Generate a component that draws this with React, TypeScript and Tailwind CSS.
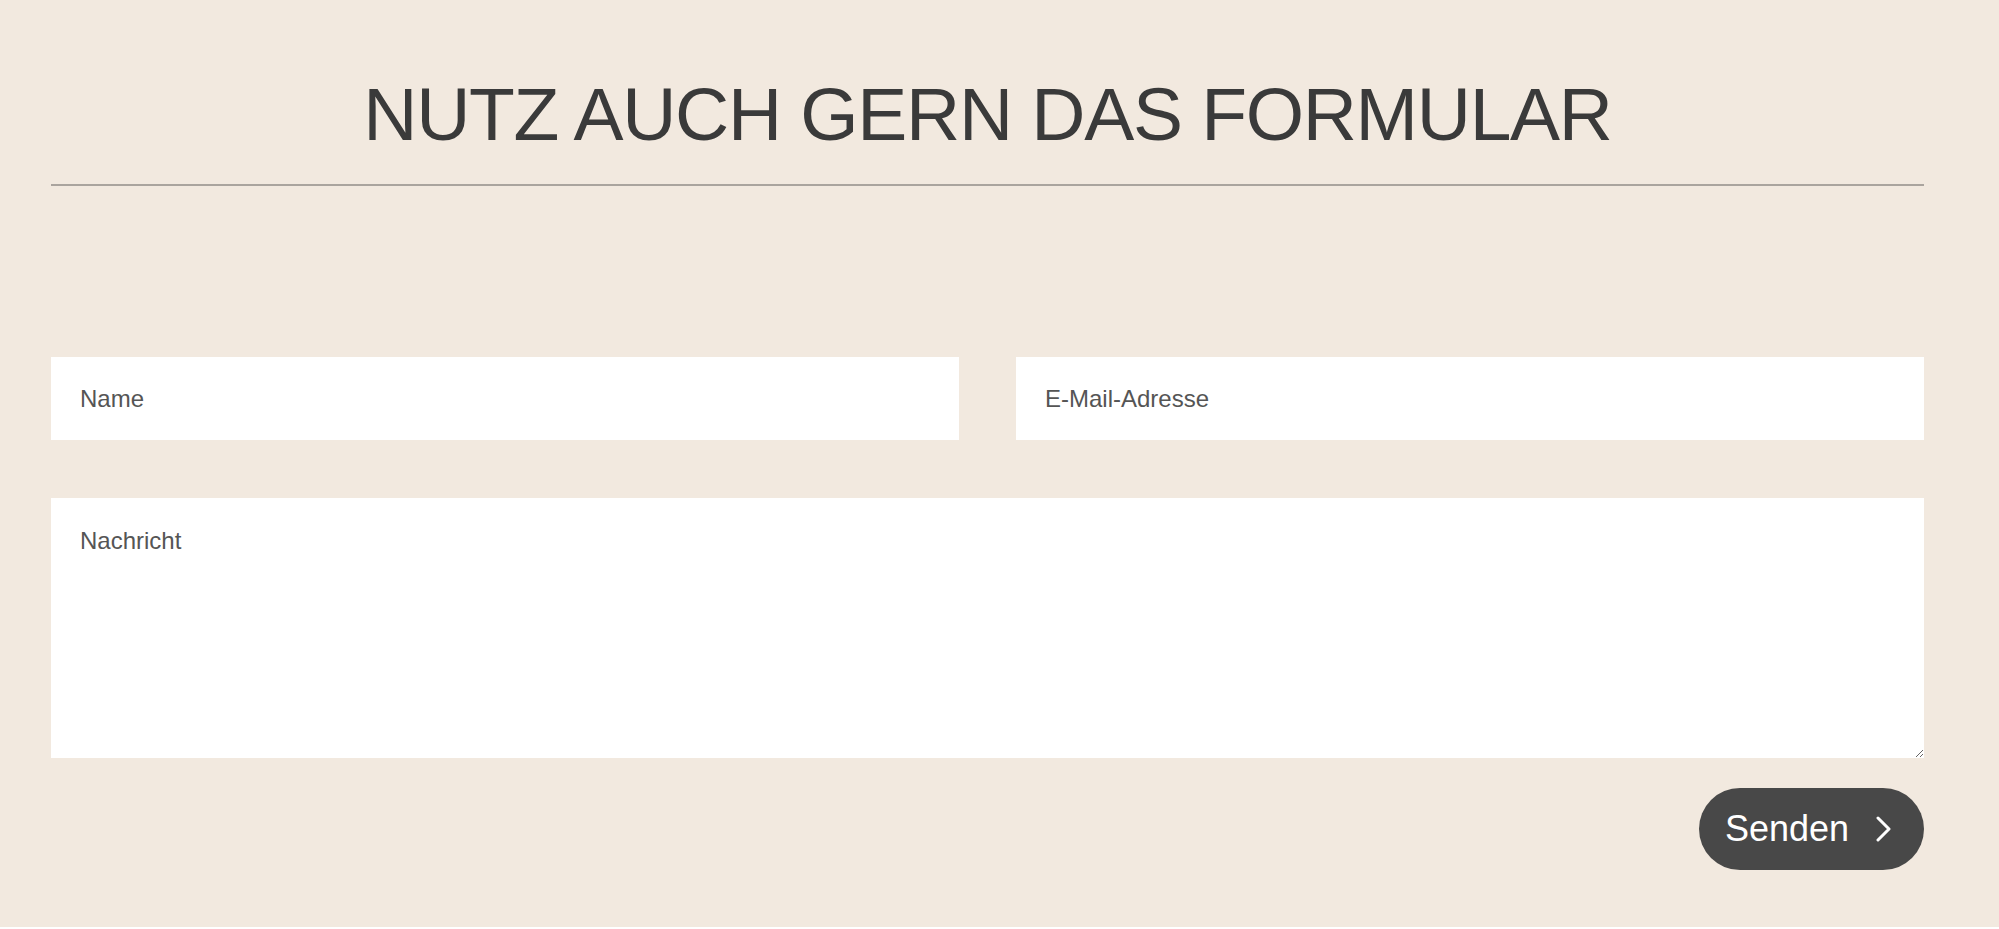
import React from "react";

export default function App() {
  const font = { fontFamily: '"Liberation Sans", Arial, Helvetica, sans-serif' };
  return (
    <div className="w-full h-[927px] bg-[#f2e9df]" style={font}>
      <div className="ml-[51px] w-[1873px] pt-[77px] flex flex-col">
        <h1 className="text-center text-[75px] leading-[75px] font-normal text-[#3a3a3a] tracking-[-1.3px]">
          NUTZ AUCH GERN DAS FORMULAR
        </h1>
        <div className="mt-[32px] h-[2px] bg-[#aaa49e]" />
        <form className="mt-[171px] flex flex-col" onSubmit={(e) => e.preventDefault()}>
          <div className="flex gap-[57px]">
            <input
              type="text"
              placeholder="Name"
              className="flex-1 h-[83px] bg-white pl-[29px] text-[24px] text-[#4a4a4a] placeholder:text-[#555555] outline-none border-0"
              style={font}
            />
            <input
              type="email"
              placeholder="E-Mail-Adresse"
              className="flex-1 h-[83px] bg-white pl-[29px] text-[24px] text-[#4a4a4a] placeholder:text-[#555555] outline-none border-0"
              style={font}
            />
          </div>
          <textarea
            placeholder="Nachricht"
            className="mt-[58px] h-[260px] w-full bg-white pl-[29px] pt-[25px] text-[24px] leading-[36px] text-[#4a4a4a] placeholder:text-[#555555] outline-none border-0 resize-y"
            style={font}
          />
          <div className="mt-[30px] flex justify-end">
            <button
              type="submit"
              className="h-[82px] rounded-full bg-[#484848] pl-[26px] pr-[32px] flex items-center text-white text-[36px]"
              style={font}
            >
              <span>Senden</span>
              <svg
                className="ml-[26px]"
                width="17"
                height="26"
                viewBox="0 0 17 26"
                fill="none"
                stroke="white"
                strokeWidth="3"
                strokeLinecap="round"
                strokeLinejoin="round"
              >
                <path d="M3 2 L14 13 L3 24" />
              </svg>
            </button>
          </div>
        </form>
      </div>
    </div>
  );
}
